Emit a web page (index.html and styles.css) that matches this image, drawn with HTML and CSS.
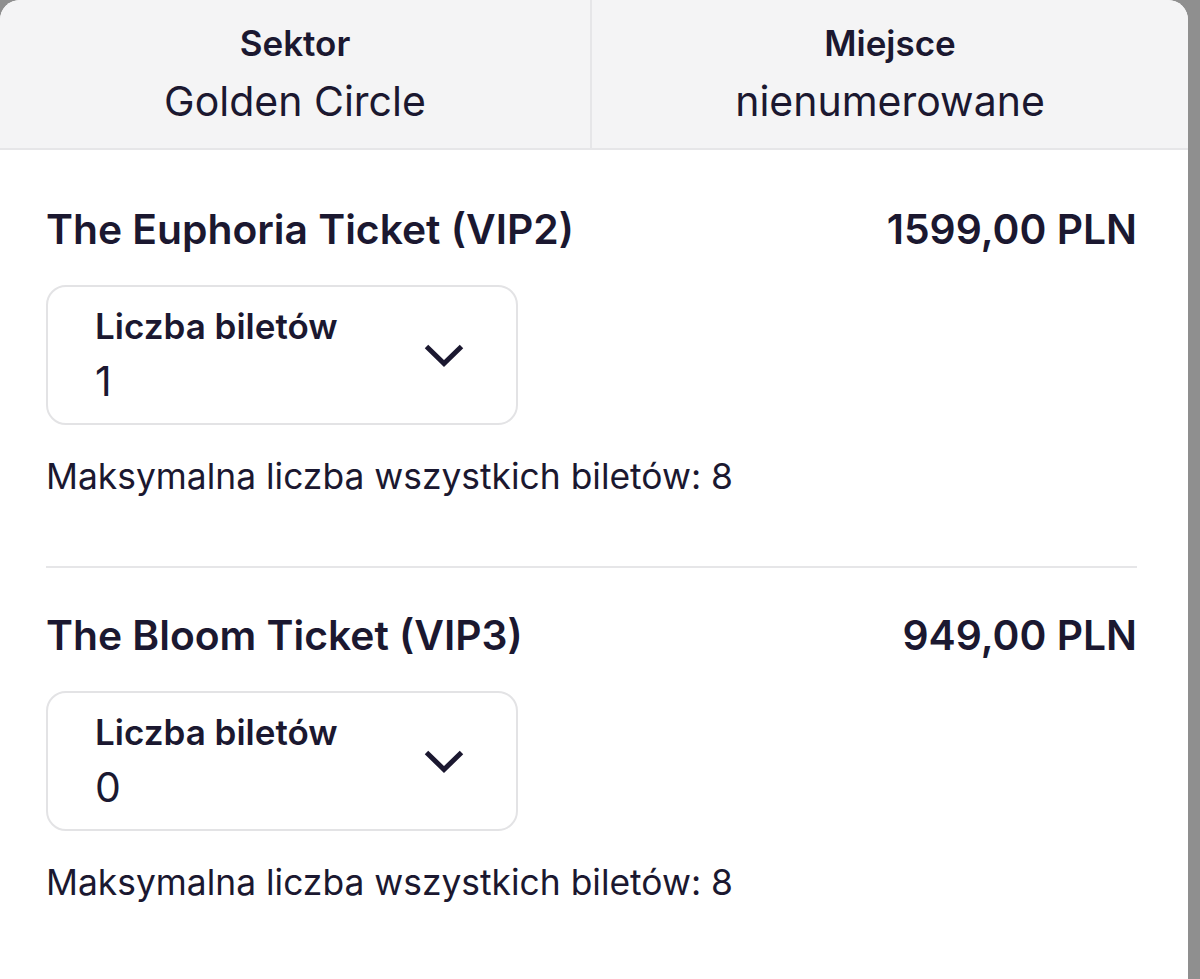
FILE: index.html
```html
<!DOCTYPE html>
<html lang="pl">
<head>
<meta charset="utf-8">
<title>Bilety</title>
<link rel="stylesheet" href="styles.css">
</head>
<body>
<div class="card">
  <div class="info">
    <div class="info-col">
      <div class="info-label">Sektor</div>
      <div class="info-value">Golden Circle</div>
    </div>
    <div class="info-col">
      <div class="info-label">Miejsce</div>
      <div class="info-value">nienumerowane</div>
    </div>
  </div>
  <div class="tickets">
    <div class="ticket">
      <div class="ticket-head">
        <div class="ticket-name">The Euphoria Ticket (VIP2)</div>
        <div class="ticket-price">1599,00 PLN</div>
      </div>
      <div class="select">
        <div class="select-text">
          <div class="select-label">Liczba biletów</div>
          <div class="select-value">1</div>
        </div>
        <svg class="chevron" width="40" height="24" viewBox="0 0 40 24"><path d="M2.5 3.5 L20 20.5 L37.5 3.5" fill="none" stroke="#1b1830" stroke-width="5" stroke-linejoin="miter"/></svg>
      </div>
      <div class="ticket-max">Maksymalna liczba wszystkich biletów: 8</div>
    </div>
    <div class="ticket ticket-second">
      <div class="ticket-head">
        <div class="ticket-name">The Bloom Ticket (VIP3)</div>
        <div class="ticket-price">949,00 PLN</div>
      </div>
      <div class="select">
        <div class="select-text">
          <div class="select-label">Liczba biletów</div>
          <div class="select-value">0</div>
        </div>
        <svg class="chevron" width="40" height="24" viewBox="0 0 40 24"><path d="M2.5 3.5 L20 20.5 L37.5 3.5" fill="none" stroke="#1b1830" stroke-width="5" stroke-linejoin="miter"/></svg>
      </div>
      <div class="ticket-max">Maksymalna liczba wszystkich biletów: 8</div>
    </div>
  </div>
</div>
</body>
</html>
```
FILE: styles.css
```css
html, body {
  margin: 0;
  padding: 0;
}
body {
  background: #8f8f8f;
  font-family: Inter, "Noto Sans", sans-serif;
  color: #1b1830;
  height: 979px;
  overflow: hidden;
}
.card {
  width: 1188px;
  height: 979px;
  background: #ffffff;
  border-radius: 20px 20px 0 0;
  overflow: hidden;
}
.info {
  display: grid;
  grid-template-columns: 590px 1fr;
  background: #f4f4f5;
  border-bottom: 2px solid #e6e6e8;
  height: 148px;
}
.info-col {
  display: flex;
  flex-direction: column;
  align-items: center;
  padding-top: 22px;
}
.info-col + .info-col {
  border-left: 2px solid #e6e6e8;
}
.info-label {
  font-size: 35px;
  font-weight: 600;
  line-height: 42px;
}
.info-value {
  font-size: 41px;
  font-weight: 400;
  line-height: 50px;
  margin-top: 12px;
}
.tickets {
  padding: 0 51px 0 46px;
}
.ticket {
  padding-top: 54px;
  padding-bottom: 68px;
}
.ticket-second {
  border-top: 2px solid #e6e6e8;
  padding-top: 42px;
}
.ticket-head {
  display: flex;
  justify-content: space-between;
  align-items: center;
  font-size: 40.8px;
  font-weight: 600;
  line-height: 50px;
}
.select {
  margin-top: 31px;
  width: 472px;
  box-sizing: border-box;
  height: 140px;
  border: 2px solid #e3e3e5;
  border-radius: 20px;
  display: flex;
  align-items: center;
  justify-content: space-between;
  padding: 0 52px 0 47px;
}
.select-text {
  display: flex;
  flex-direction: column;
}
.select-label {
  font-size: 35px;
  font-weight: 600;
  line-height: 42px;
}
.select-value {
  font-size: 41px;
  line-height: 48px;
  margin-top: 10px;
}
.chevron {
  display: block;
}
.ticket-max {
  margin-top: 31px;
  font-size: 35.4px;
  line-height: 42px;
}
```
